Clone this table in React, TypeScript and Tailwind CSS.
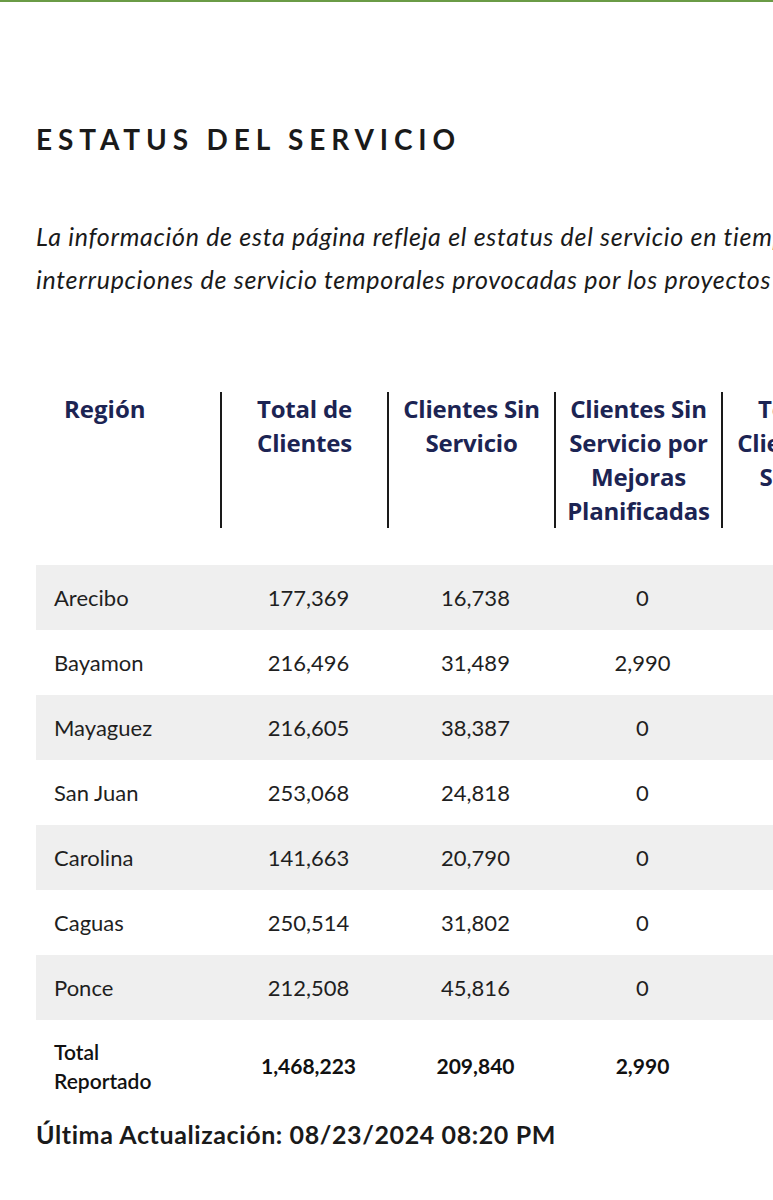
import React from "react";

const rows = [
  ["Arecibo", "177,369", "16,738", "0", "16,738"],
  ["Bayamon", "216,496", "31,489", "2,990", "34,479"],
  ["Mayaguez", "216,605", "38,387", "0", "38,387"],
  ["San Juan", "253,068", "24,818", "0", "24,818"],
  ["Carolina", "141,663", "20,790", "0", "20,790"],
  ["Caguas", "250,514", "31,802", "0", "31,802"],
  ["Ponce", "212,508", "45,816", "0", "45,816"],
];

const headers = [
  "Total de Clientes",
  "Clientes Sin Servicio",
  "Clientes Sin Servicio por Mejoras Planificadas",
  "Total de Clientes Sin Servicio",
];

export default function App() {
  return (
    <div className="w-[773px] h-[1200px] overflow-hidden bg-white" style={{ fontFamily: "Lato, 'Open Sans', sans-serif" }}>
      <div className="h-[2px] bg-[#6a9b46]" />
      <div className="pl-[36px] pt-[119px]">
        <h1 className="text-[28px] leading-[36px] font-bold tracking-[0.21em] text-[#1a1a1a] whitespace-nowrap">
          ESTATUS DEL SERVICIO
        </h1>
        <p className="mt-[58px] text-[25px] leading-[43px] italic text-[#1a1a1a] whitespace-nowrap tracking-[0.7px]">
          La información de esta página refleja el estatus del servicio en tiempo real, incluyendo las
          <br />
          interrupciones de servicio temporales provocadas por los proyectos de mejoras planificadas.
        </p>
        <div className="mt-[91px] w-[900px]">
          <div className="flex h-[136px]" style={{ fontFamily: "'Open Sans', sans-serif" }}>
            <div className="w-[184px] shrink-0 pl-[28px] text-[24px] leading-[34px] font-bold text-[#1c2453]">Región</div>
            {headers.map((h, i) => (
              <div
                key={i}
                className="w-[167px] shrink-0 border-l-2 border-[#1a1a1a] px-[6px] text-center text-[24px] leading-[34px] font-bold text-[#1c2453] tracking-[-0.2px]"
              >
                {h}
              </div>
            ))}
          </div>
          <div className="mt-[37px]">
            {rows.map((r, i) => (
              <div
                key={r[0]}
                className={`flex h-[65px] items-center text-[22px] text-[#1f1f1f] ${i % 2 === 0 ? "bg-[#efefef]" : "bg-white"}`}
              >
                <div className="w-[184px] shrink-0 pl-[18px]">{r[0]}</div>
                {r.slice(1).map((v, j) => (
                  <div key={j} className={`w-[167px] shrink-0 text-center ${j === 3 ? "pl-[40px]" : "pl-[10px]"}`}>
                    {v}
                  </div>
                ))}
              </div>
            ))}
            <div className="flex h-[92px] items-center text-[21px] text-[#111]">
              <div className="w-[184px] shrink-0 pl-[18px] leading-[29px] font-semibold">
                Total
                <br />
                Reportado
              </div>
              {["1,468,223", "209,840", "2,990", "212,830"].map((v, j) => (
                <div key={j} className={`w-[167px] shrink-0 text-center font-bold ${j === 3 ? "pl-[40px]" : "pl-[10px]"}`}>
                  {v}
                </div>
              ))}
            </div>
          </div>
        </div>
        <div className="mt-[6px] text-[25px] leading-[32px] font-bold tracking-[0.6px] text-[#1a1a1a] whitespace-nowrap">
          Última Actualización: 08/23/2024 08:20 PM
        </div>
      </div>
    </div>
  );
}
